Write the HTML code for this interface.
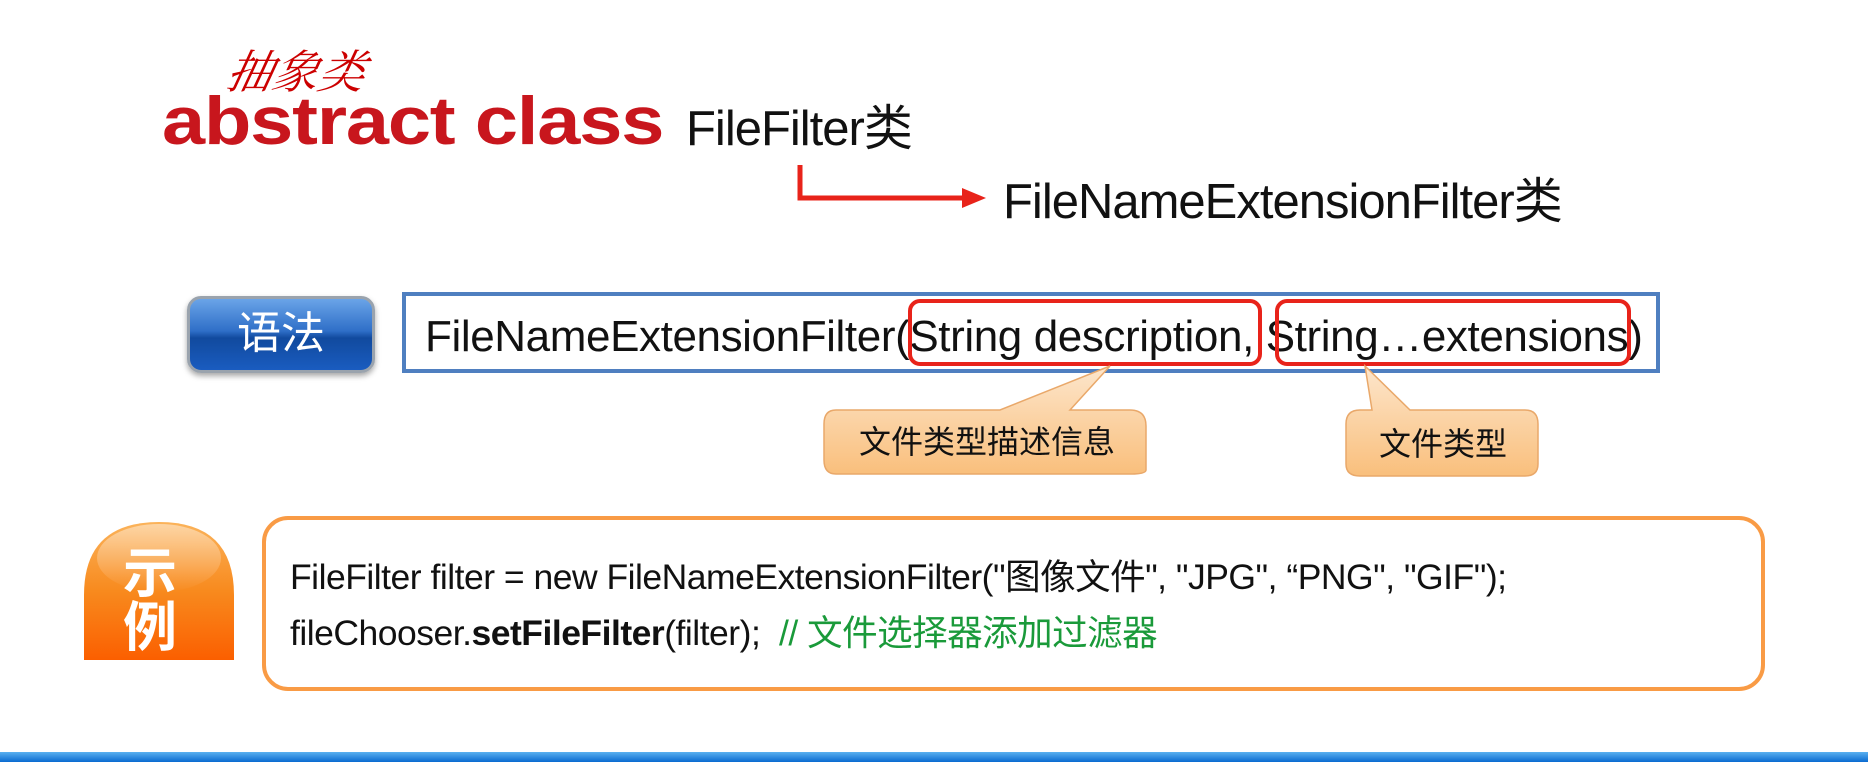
<!DOCTYPE html>
<html><head><meta charset="utf-8"><style>
*{margin:0;padding:0;box-sizing:border-box}
body{width:1868px;height:762px;background:#fff;position:relative;overflow:hidden;font-family:"Liberation Sans","Noto Sans CJK SC",sans-serif}
.a{position:absolute;white-space:nowrap}
</style></head><body>
<div class="a" style="left:228px;top:36px;font-family:'Liberation Serif','Noto Serif CJK SC',serif;font-style:italic;font-size:46px;color:#c00;transform:skewX(-12deg)">抽象类</div>
<div class="a" style="left:162px;top:82px;font-size:68px;line-height:78px;font-weight:bold;color:#c8161d;letter-spacing:-1px;transform:scaleX(1.14);transform-origin:left">abstract class</div>
<div class="a" style="left:686px;top:89px;font-size:49px;color:#111;letter-spacing:-1px">FileFilter类</div>
<svg class="a" style="left:790px;top:160px" width="220" height="50"><path d="M10 5 V38 H180" stroke="#e8231a" stroke-width="5" fill="none"/><path d="M172 28 L196 38 L172 48 Z" fill="#e8231a"/></svg>
<div class="a" style="left:1003px;top:162px;font-size:49px;color:#111;letter-spacing:-1px">FileNameExtensionFilter类</div>

<div class="a" style="left:187px;top:296px;width:188px;height:77px;border-radius:14px;border:3px solid #9aa3ad;background:linear-gradient(#6aa4e8 0%,#2f6fc8 45%,#114a9e 55%,#1a5cc0 100%);box-shadow:0 3px 6px rgba(0,0,0,.35);color:#fff;font-size:44px;text-align:center;line-height:70px">语法</div>
<div class="a" style="left:402px;top:292px;width:1258px;height:81px;border:4px solid #4f7fc0;"></div>
<div class="a" style="left:425px;top:312px;font-size:44px;color:#111;letter-spacing:-0.4px">FileNameExtensionFilter(String description, String…extensions)</div>
<div class="a" style="left:908px;top:299px;width:354px;height:67px;border:4px solid #e8231a;border-radius:12px"></div>
<div class="a" style="left:1275px;top:299px;width:356px;height:67px;border:4px solid #e8231a;border-radius:12px"></div>

<svg class="a" style="left:820px;top:360px" width="760" height="125">
<defs><linearGradient id="g" x1="0" y1="0" x2="0" y2="1"><stop offset="0" stop-color="#fde6cc"/><stop offset="1" stop-color="#f9bf7c"/></linearGradient></defs>
<path d="M16 50 H180 L290 6 L250 50 H310 Q326 50 326 66 V110 Q326 114 310 114 H16 Q4 114 4 100 V64 Q4 50 16 50 Z" fill="url(#g)" stroke="#e9a86a" stroke-width="1.5"/>
<path d="M540 50 H552 L545 6 L590 50 H705 Q718 50 718 64 V104 Q718 116 705 116 H540 Q526 116 526 104 V64 Q526 50 540 50 Z" fill="url(#g)" stroke="#e9a86a" stroke-width="1.5"/>
<text x="167" y="93" font-size="32" text-anchor="middle" fill="#111" font-family="Noto Sans CJK SC,sans-serif">文件类型描述信息</text>
<text x="623" y="95" font-size="32" text-anchor="middle" fill="#111" font-family="Noto Sans CJK SC,sans-serif">文件类型</text>
</svg>

<svg class="a" style="left:82px;top:520px" width="155" height="142">
<defs><linearGradient id="o" x1="0" y1="0" x2="0" y2="1"><stop offset="0" stop-color="#fbb35a"/><stop offset="0.5" stop-color="#f88a1e"/><stop offset="1" stop-color="#fb5f00"/></linearGradient>
<linearGradient id="h" x1="0" y1="0" x2="0" y2="1"><stop offset="0" stop-color="#fff" stop-opacity=".45"/><stop offset="1" stop-color="#fff" stop-opacity="0"/></linearGradient></defs>
<path d="M2 140 V75 Q2 2 77 2 Q152 2 152 75 V140 Z" fill="url(#o)"/>
<ellipse cx="77" cy="38" rx="62" ry="34" fill="url(#h)"/>
<text x="68" y="72" font-size="54" font-weight="bold" fill="#fff" text-anchor="middle" font-family="Noto Sans CJK SC,sans-serif">示</text>
<text x="68" y="126" font-size="54" font-weight="bold" fill="#fff" text-anchor="middle" font-family="Noto Sans CJK SC,sans-serif">例</text>
</svg>
<div class="a" style="left:262px;top:516px;width:1503px;height:175px;border:4px solid #f99b45;border-radius:26px"></div>
<div class="a" style="left:290px;top:549px;font-size:35.5px;color:#111;letter-spacing:-0.5px">FileFilter filter = new FileNameExtensionFilter("图像文件", "JPG", “PNG", "GIF");</div>
<div class="a" style="left:290px;top:605px;font-size:35.5px;color:#111;letter-spacing:-0.5px">fileChooser.<b>setFileFilter</b>(filter);&nbsp;&nbsp;<span style="color:#1a9a3a">// 文件选择器添加过滤器</span></div>
<div class="a" style="left:0;top:752px;width:1868px;height:10px;background:linear-gradient(#5ab0f0,#0a6ad0)"></div>
</body></html>
